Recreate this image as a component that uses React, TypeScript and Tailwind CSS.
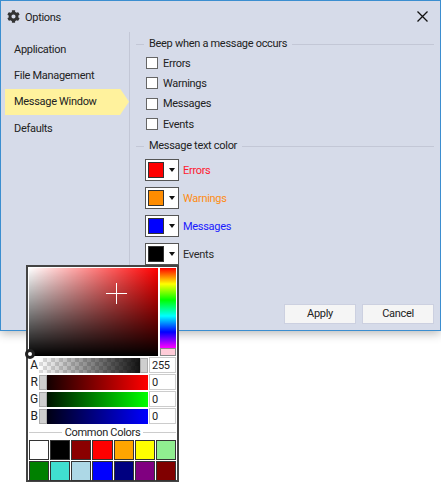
import React from 'react';
import { FaCog } from 'react-icons/fa';

const sections = ['Application', 'File Management', 'Message Window', 'Defaults'];
const beepRows = ['Errors', 'Warnings', 'Messages', 'Events'];
const textColors = [
  { label: 'Errors', swatch: 'bg-[#ff0000]', text: 'text-[#ff1a2e]' },
  { label: 'Warnings', swatch: 'bg-[#ff8c00]', text: 'text-[#ff8c14]' },
  { label: 'Messages', swatch: 'bg-[#0000ff]', text: 'text-[#1a1aff]' },
  { label: 'Events', swatch: 'bg-[#000000]', text: 'text-[#2a2a2a]' },
];
const channels = [
  { label: 'R', track: 'bg-[linear-gradient(to_right,#000,#f00)]' },
  { label: 'G', track: 'bg-[linear-gradient(to_right,#000,#0f0)]' },
  { label: 'B', track: 'bg-[linear-gradient(to_right,#000,#00f)]' },
];
const commonColors = [
  'bg-[#ffffff]', 'bg-[#000000]', 'bg-[#8b0000]', 'bg-[#ff0000]', 'bg-[#ffa500]', 'bg-[#ffff00]', 'bg-[#90ee90]',
  'bg-[#008000]', 'bg-[#40e0d0]', 'bg-[#add8e6]', 'bg-[#0000ff]', 'bg-[#000080]', 'bg-[#800080]', 'bg-[#800000]',
];

const GroupHeader: React.FC<{ title: string }> = ({ title }) => (
  <div className="flex items-center h-[16px] gap-[5px]">
    <div className="w-[8px] h-px bg-[#c3c7d6]" />
    <span className="pt-px">{title}</span>
    <div className="flex-1 h-px bg-[#c3c7d6]" />
  </div>
);

const App: React.FC = () => {
  return (
    <div className="relative w-[441px] h-[485px] overflow-hidden bg-white font-['Roboto',sans-serif] text-[11px] tracking-[-0.3px] text-[#222]">
      {/* Options dialog */}
      <div className="w-[441px] h-[331px] flex flex-col border border-[#3b8ed0] bg-[#d6dbe9] shadow-[0_2px_10px_rgba(0,0,0,0.3)]">
        <div className="h-[31px] shrink-0 flex items-center pl-[6px] pr-[12px] pt-[2px]">
          <FaCog className="w-[13px] h-[13px] text-[#333] mr-[5px] -mt-[3px]" />
          <span className="pt-[2px]">Options</span>
          <svg className="ml-auto -mt-[2px]" width="11" height="11" viewBox="0 0 11 11">
            <path d="M0.5 0.5L10.5 10.5M10.5 0.5L0.5 10.5" stroke="#111" strokeWidth="1.3" fill="none" />
          </svg>
        </div>

        <div className="flex flex-1 min-h-0">
          {/* Section list */}
          <div className="w-[129px] shrink-0 pl-[4px] pt-[4px] border-r border-[#c3c7d6]">
            {sections.map((s) => (
              <div
                key={s}
                className={
                  s === 'Message Window'
                    ? 'h-[26.3px] flex items-center pl-[9px] pt-[2px] bg-[#fff29d] [clip-path:polygon(0_0,115px_0,100%_50%,115px_100%,0_100%)]'
                    : 'h-[26.3px] flex items-center pl-[9px] pt-[2px]'
                }
              >
                {s}
              </div>
            ))}
          </div>

          {/* Settings */}
          <div className="flex-1 pl-[6px] pr-[6px] pt-[4px]">
            <GroupHeader title="Beep when a message occurs" />
            <div className="mt-[1px] pl-[10px]">
              {beepRows.map((r) => (
                <div key={r} className="h-[20.3px] flex items-center gap-[5px]">
                  <div className="w-[12px] h-[12px] bg-white border border-[#666]" />
                  <span className="pt-[2px]">{r}</span>
                </div>
              ))}
            </div>
            <div className="mt-[4px]">
              <GroupHeader title="Message text color" />
            </div>
            <div className="mt-[5px] pl-[9px] flex flex-col gap-[6px]">
              {textColors.map((c) => (
                <div key={c.label} className="flex items-center gap-[4px]">
                  <div className="w-[34px] h-[22px] flex items-center bg-white border border-[#555] pl-[2px]">
                    <div className={`w-[16px] h-[16px] border border-[#333] ${c.swatch}`} />
                    <svg className="ml-[5px]" width="6" height="4" viewBox="0 0 6 4">
                      <path d="M0 0H6L3 4Z" fill="#111" />
                    </svg>
                  </div>
                  <span className={`pt-[2px] ${c.text}`}>{c.label}</span>
                </div>
              ))}
            </div>
            <div className="flex justify-end gap-[6px] mt-[39px]">
              <button className="w-[72px] h-[20px] pt-px bg-[#f5f5f5] border border-[#ccd0e0]">Apply</button>
              <button className="w-[72px] h-[20px] pt-px bg-[#f5f5f5] border border-[#ccd0e0]">Cancel</button>
            </div>
          </div>
        </div>
      </div>

      {/* Colour picker popup */}
      <div className="absolute left-[26px] top-[265px] w-[153px] h-[217px] bg-white border-2 border-[#444] pl-[1px] pr-[1px] pt-[1px]">
        <div className="flex gap-[2px] h-[88px]">
          <div className="relative w-[130px] bg-[linear-gradient(to_top,#000,transparent),linear-gradient(to_right,#fff,#f00)]">
            <div className="absolute left-[77px] top-[25px] w-[21px] h-px bg-white" />
            <div className="absolute left-[87px] top-[15px] w-px h-[21px] bg-white" />
          </div>
          <div className="w-[16px] flex flex-col">
            <div className="flex-1 bg-[linear-gradient(to_bottom,#f00,#ff0,#0f0,#0ff,#00f,#f0f)]" />
            <div className="h-[8px] bg-[#ffccd8] border border-[#888]" />
          </div>
        </div>
        <div className="absolute left-[-3px] top-[82px] w-[10px] h-[10px] rounded-full border-[3px] border-[#222] bg-white" />

        <div className="flex items-center h-[16px] mt-[1px]">
          <span className="w-[10px] text-center text-[12px]">A</span>
          <div className="flex-1 h-[15px] flex justify-end [background:linear-gradient(to_right,transparent,#000),repeating-conic-gradient(#ddd_0_25%,#fff_0_50%)_0_0/8px_8px]">
            <div className="w-[8px] bg-[#cfcfcf] border border-[#aaa]" />
          </div>
          <div className="w-[27px] h-[16px] ml-[1px] border border-[#ccc] pl-[2px] pt-px leading-[14px]">255</div>
        </div>
        <div className="flex flex-col gap-[1px] mt-[1px]">
          {channels.map((c) => (
            <div key={c.label} className="flex items-center h-[16px]">
              <span className="w-[10px] text-center text-[12px]">{c.label}</span>
              <div className={`flex-1 h-[15px] ${c.track}`}>
                <div className="w-[8px] h-full bg-[#cfcfcf] border border-[#aaa]" />
              </div>
              <div className="w-[27px] h-[16px] ml-[1px] border border-[#ccc] pl-[2px] pt-px leading-[14px]">0</div>
            </div>
          ))}
        </div>

        <div className="flex items-center gap-[3px] h-[15px] mt-[1px]">
          <div className="flex-1 h-px bg-[#ccc]" />
          <span className="pt-px">Common Colors</span>
          <div className="flex-1 h-px bg-[#ccc]" />
        </div>
        <div className="grid grid-cols-7 gap-[1px]">
          {commonColors.map((c, i) => (
            <div key={i} className={`h-[20px] border border-[#333] ${c}`} />
          ))}
        </div>
      </div>
    </div>
  );
};

export default App;
